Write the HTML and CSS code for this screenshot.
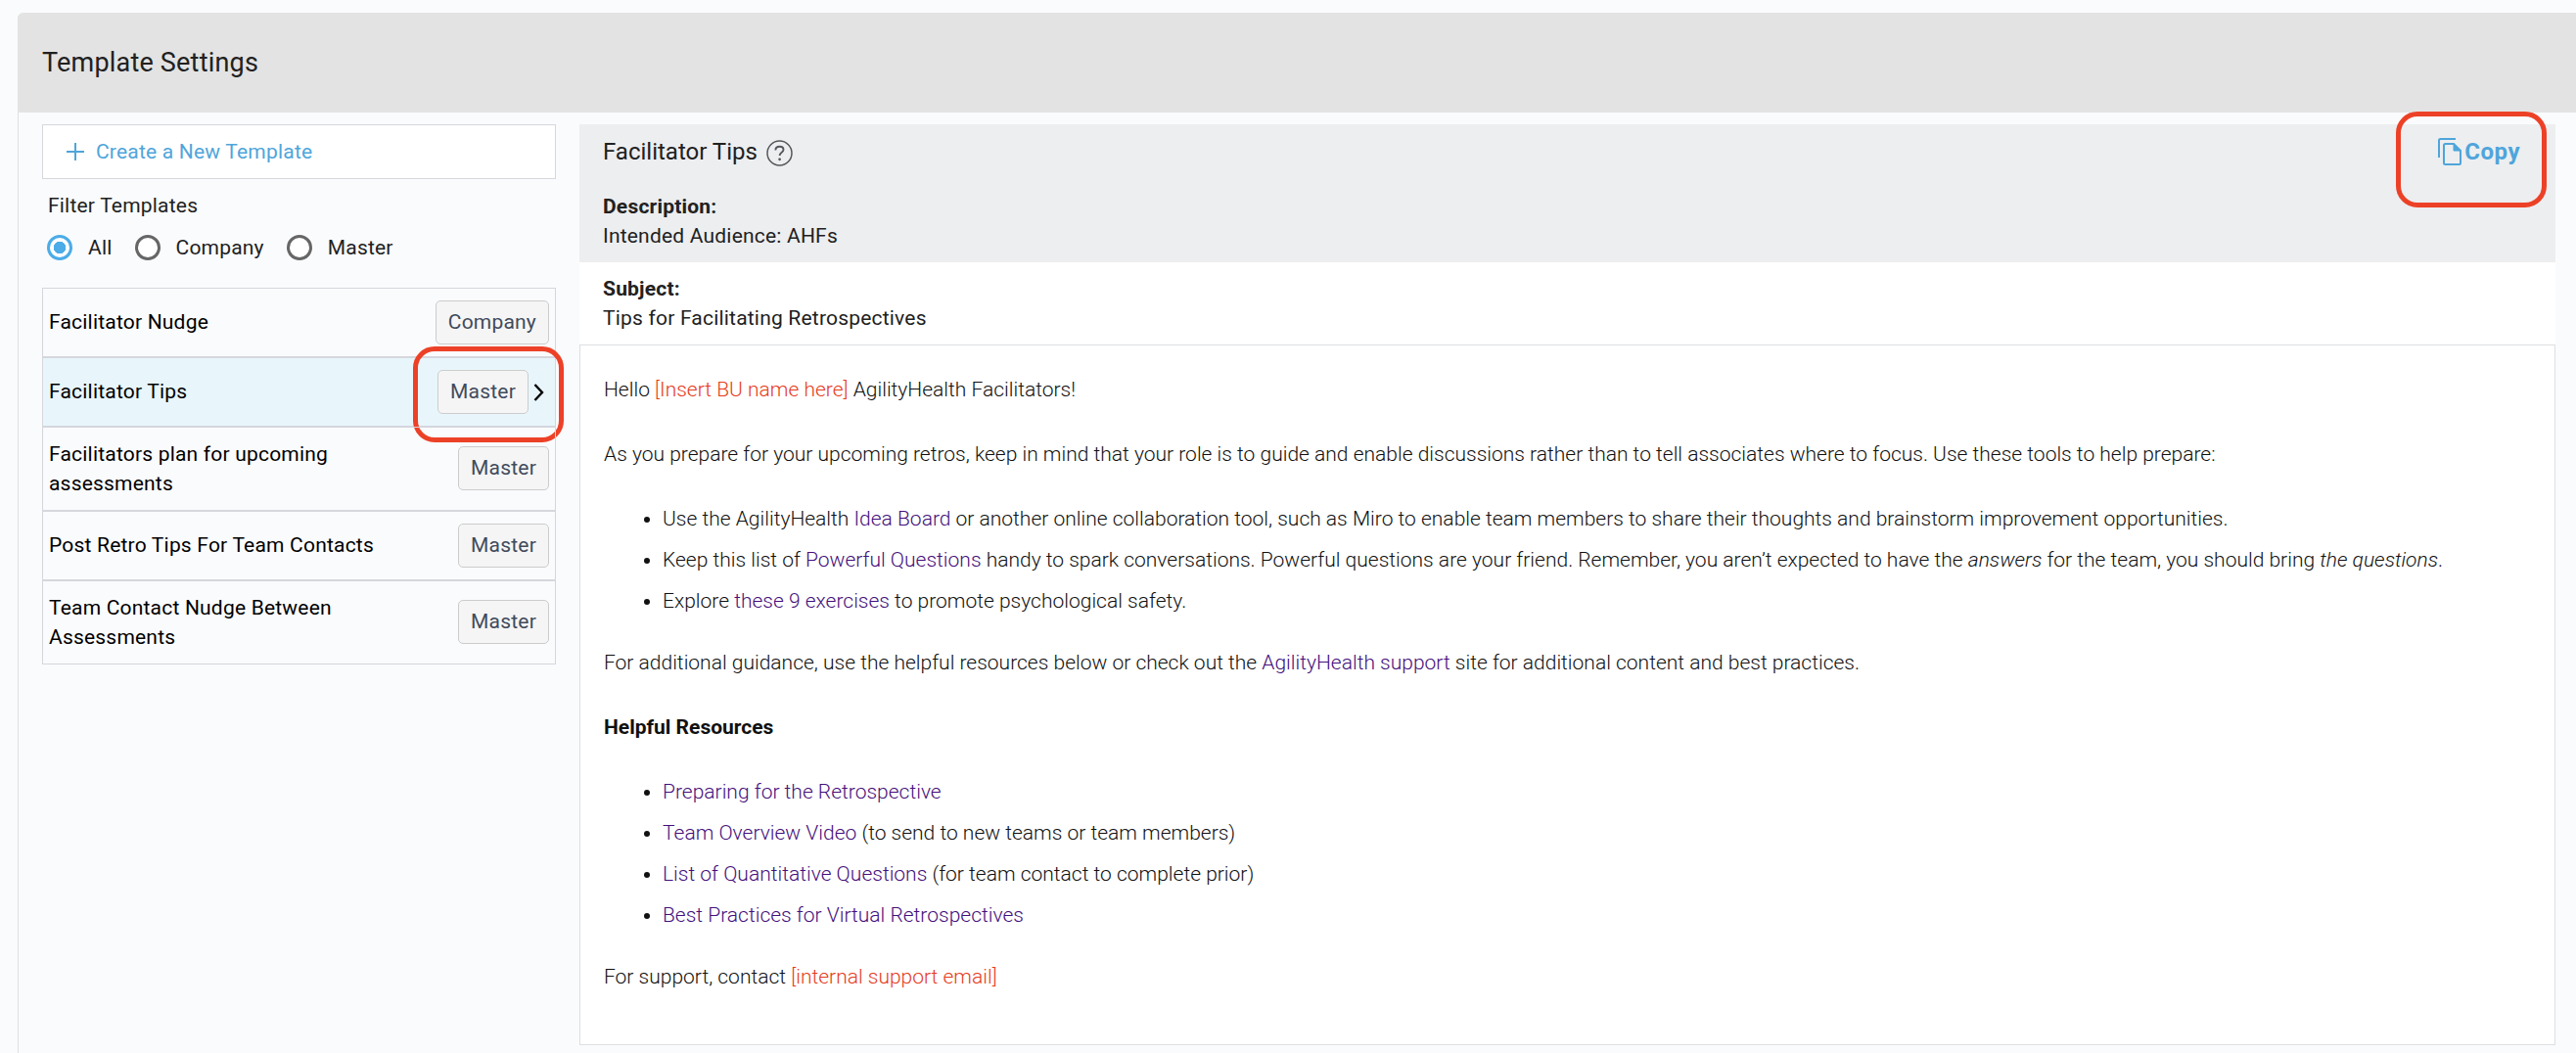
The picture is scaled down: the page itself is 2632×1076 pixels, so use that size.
FILE: index.html
```html
<!DOCTYPE html>
<html lang="en">
<head>
<meta charset="UTF-8" />
<meta name="viewport" content="width=device-width, initial-scale=1" />
<title>Template Settings</title>
<link rel="stylesheet" href="styles.css">
</head>
<body>

<div class="panel">
  <header class="panel-header">
    <h1>Template Settings</h1>
  </header>

  <div class="panel-body">
    <aside class="sidebar">
      <button class="create-btn">
        <svg width="18" height="18" viewBox="0 0 18 18"><path d="M9 0v18M0 9h18" stroke="currentColor" stroke-width="2" fill="none"/></svg>
        <span>Create a New Template</span>
      </button>

      <p class="filter-title">Filter Templates</p>
      <div class="filters">
        <label><input type="radio" name="filter" checked /><span>All</span></label>
        <label><input type="radio" name="filter" /><span>Company</span></label>
        <label><input type="radio" name="filter" /><span>Master</span></label>
      </div>

      <ul class="template-list">
        <li><span class="name">Facilitator Nudge</span><span class="badge">Company</span></li>
        <li class="active">
          <span class="name">Facilitator Tips</span><span class="badge">Master</span>
          <svg class="arrow" width="11" height="18" viewBox="0 0 11 18"><path d="M1.5 1l7.5 8-7.5 8" stroke="#000" stroke-width="2.4" fill="none"/></svg>
          <div class="highlight highlight-master"></div>
        </li>
        <li class="two-line"><span class="name">Facilitators plan for upcoming assessments</span><span class="badge">Master</span></li>
        <li><span class="name">Post Retro Tips For Team Contacts</span><span class="badge">Master</span></li>
        <li class="two-line"><span class="name">Team Contact Nudge Between Assessments</span><span class="badge">Master</span></li>
      </ul>
    </aside>

    <main class="preview">
      <section class="info">
        <div class="info-top">
          <h2>Facilitator Tips</h2>
          <svg class="help" width="27" height="27" viewBox="0 0 27 27" fill="none" stroke="#55575a">
            <circle cx="13.5" cy="13.5" r="12.5" stroke-width="1.5"/>
            <path d="M9.4 10.4c0-2.4 1.8-3.7 4.1-3.7s4 1.2 4 3.2c0 2.9-3.9 3-3.9 6.2" stroke-width="1.9"/>
            <circle cx="13.6" cy="19.8" r="1.4" fill="#55575a" stroke="none"/>
          </svg>
          <a class="copy">
            <svg width="24" height="28" viewBox="0 0 24 28" fill="none" stroke="currentColor" stroke-width="2">
              <path d="M1 20V2.5A1.5 1.5 0 0 1 2.5 1H18"/>
              <path d="M7.5 6H16l7 7v12.5a1.5 1.5 0 0 1-1.5 1.5h-14A1.5 1.5 0 0 1 6 25.5V7.5A1.5 1.5 0 0 1 7.5 6z"/>
              <path d="M16 6v7h7z" fill="currentColor" stroke-width="1"/>
            </svg>
            <span>Copy</span>
          </a>
          <div class="highlight highlight-copy"></div>
        </div>
        <strong>Description:</strong>
        <p>Intended Audience: AHFs</p>
      </section>

      <section class="subject">
        <strong>Subject:</strong>
        <p>Tips for Facilitating Retrospectives</p>
      </section>

      <article class="message">
        <p>Hello <span class="placeholder">[Insert BU name here]</span> AgilityHealth Facilitators!</p>
        <p>As you prepare for your upcoming retros, keep in mind that your role is to guide and enable discussions rather than to tell associates where to focus. Use these tools to help prepare:</p>
        <ul>
          <li>Use the AgilityHealth <a href="#">Idea Board</a> or another online collaboration tool, such as Miro to enable team members to share their thoughts and brainstorm improvement opportunities.</li>
          <li>Keep this list of <a href="#">Powerful Questions</a> handy to spark conversations. Powerful questions are your friend. Remember, you aren’t expected to have the <em>answers</em> for the team, you should bring <em>the questions</em>.</li>
          <li>Explore <a href="#">these 9 exercises</a> to promote psychological safety.</li>
        </ul>
        <p>For additional guidance, use the helpful resources below or check out the <a href="#">AgilityHealth support</a> site for additional content and best practices.</p>
        <p><strong>Helpful Resources</strong></p>
        <ul>
          <li><a href="#">Preparing for the Retrospective</a></li>
          <li><a href="#">Team Overview Video</a> (to send to new teams or team members)</li>
          <li><a href="#">List of Quantitative Questions</a> (for team contact to complete prior)</li>
          <li><a href="#">Best Practices for Virtual Retrospectives</a></li>
        </ul>
        <p>For support, contact <span class="placeholder">[internal support email]</span></p>
      </article>
    </main>
  </div>
</div>

</body>
</html>
```
FILE: styles.css
```css
* {
  box-sizing: border-box;
}
body {
  font-family: Roboto, "Liberation Sans", sans-serif;
  font-size: 21px;
  line-height: 30px;
  background: #fafbfd;
  color: #212121;
  margin: 0;
  height: 1076px;
  overflow: hidden;
}
h1, h2, p, ul {
  margin: 0;
  padding: 0;
  font-weight: 400;
}
.panel {
  margin: 13px 0 0 18px;
  height: 1080px;
  border-left: 1px solid #dedfe1;
  border-radius: 6px 0 0 0;
}
.panel-header {
  height: 102px;
  display: flex;
  align-items: center;
  margin-left: -1px;
  padding-left: 25px;
  background: #e3e3e3;
  border-radius: 6px 0 0 0;
}
.panel-header h1 {
  font-size: 27px;
  letter-spacing: 0.2px;
}
.panel-body {
  display: flex;
  gap: 24px;
  padding: 12px 21px 0 24px;
}

/* left column */
.sidebar {
  width: 525px;
  flex: none;
  letter-spacing: 0.2px;
}
.create-btn {
  display: flex;
  align-items: center;
  gap: 12px;
  width: 100%;
  height: 56px;
  padding: 0 24px;
  background: #fff;
  border: 1px solid #d5d7dd;
  color: #4fa5db;
  font: inherit;
  letter-spacing: inherit;
}
.filter-title {
  margin: 12px 0 0 6px;
}
.filters {
  display: flex;
  gap: 23px;
  height: 30px;
  margin: 13px 0 0 5px;
}
.filters label {
  display: flex;
  align-items: center;
  gap: 16px;
}
.filters input {
  appearance: none;
  width: 26px;
  height: 26px;
  margin: 0;
  border: 3px solid #666;
  border-radius: 50%;
  background: #fff;
}
.filters input:checked {
  border-color: #4bace8;
  background: radial-gradient(circle, #4bace8 6px, #fff 6.5px);
}
.template-list {
  margin-top: 26px;
  list-style: none;
  color: #000;
}
.template-list li {
  position: relative;
  display: flex;
  align-items: center;
  padding: 12px 6px;
  border: 1px solid #d5d7dd;
}
.template-list .active {
  background: #e8f6fc;
}
.name {
  flex: 1;
  margin: -1px 0 1px;
  padding-right: 60px;
}
.two-line .name {
  margin: 0;
}
.badge {
  height: 45px;
  padding: 0 12px;
  line-height: 42px;
  border: 1px solid #ccc;
  border-radius: 5px;
  background: #f5f5f5;
  color: #414b5c;
}
.two-line .badge {
  margin-bottom: 1px;
}
.arrow {
  margin: 0 5px 0 5px;
}
.highlight {
  position: absolute;
  width: 154px;
  height: 98px;
  border: 5px solid #ec4127;
  border-radius: 22px;
}
.highlight-master {
  right: -9px;
  top: -12px;
}

/* right column */
.preview {
  flex: 1;
}
.info, .subject {
  letter-spacing: 0.2px;
}
.info {
  height: 141px;
  padding: 13px 24px 0;
  background: #edeef0;
}
.info-top {
  position: relative;
  display: flex;
  align-items: center;
  height: 30px;
  margin-bottom: 26px;
}
.info-top h2 {
  font-size: 24px;
  letter-spacing: 0;
}
.help {
  margin: 3px 0 0 9px;
}
.copy {
  display: flex;
  align-items: center;
  gap: 3px;
  margin: 0 12px 0 auto;
  color: #4fa5db;
  font-size: 24px;
  font-weight: 700;
  letter-spacing: 0.5px;
}
.highlight-copy {
  right: -15px;
  top: -26px;
}
.subject {
  height: 84px;
  padding: 12px 24px 0;
  background: #fff;
}
.message {
  height: 716px;
  padding: 24px;
  background: #fff;
  border: 1px solid #dedfe1;
  color: #111;
  font-family: "Roboto Light", Roboto, "Liberation Sans", sans-serif;
  line-height: 42px;
  font-weight: 300;
}
.message p {
  margin-bottom: 24px;
}
.message ul {
  margin-bottom: 21px;
  padding-left: 60px;
}
.message a {
  color: #45107c;
  text-decoration: none;
}
.message strong {
  font-family: Roboto, "Liberation Sans", sans-serif;
}
.placeholder {
  color: #e63c1a;
}
strong {
  font-weight: 700;
}
```
